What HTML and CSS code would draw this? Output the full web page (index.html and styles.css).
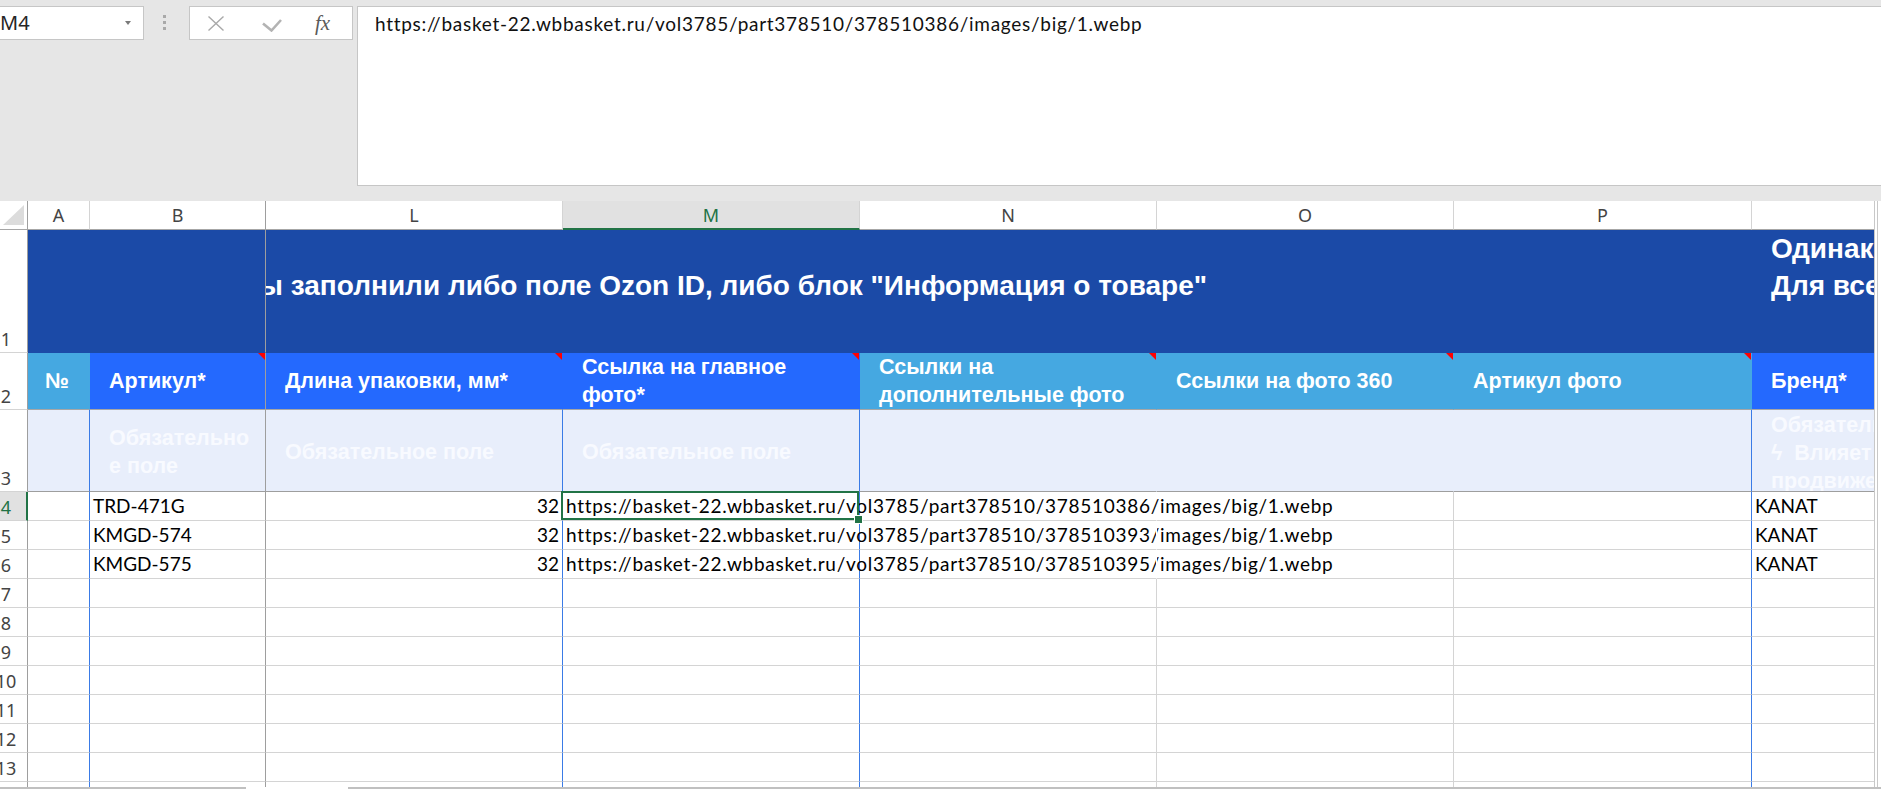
FILE: index.html
```html
<!DOCTYPE html>
<html lang="ru">
<head>
<meta charset="utf-8">
<title>Excel</title>
<link rel="stylesheet" href="styles.css">
</head>
<body>
<div class="app">
  <div class="fbar">
    <div class="namebox"><span class="nb-text">M4</span><span class="nb-arrow"></span></div>
    <div class="grip"><i></i><i></i><i></i></div>
    <div class="fbtns">
      <svg class="ic-x" width="16" height="15" viewBox="0 0 16 15"><path d="M0.5 0.5 L15.5 14.5 M15.5 0.5 L0.5 14.5" stroke="#a9a9a9" stroke-width="1.4" fill="none"/></svg>
      <svg class="ic-ok" width="20" height="13" viewBox="0 0 20 13"><path d="M1 4.5 L9.5 11.5 L19 1" stroke="#b3b3b3" stroke-width="2.6" fill="none"/></svg>
      <span class="fx">fx</span>
    </div>
    <div class="finput url">https://basket-22.wbbasket.ru/vol3785/part378510/378510386/images/big/1.webp</div>
  </div>

  <div class="main">
    <div class="sheet">
      <!-- column headers -->
      <div class="corner"><svg width="27" height="28" viewBox="0 0 27 28"><polygon points="24,4 24,24 3,24" fill="#dcdcdc"/></svg></div>
      <div class="ch">A</div>
      <div class="ch chb">B</div>
      <div class="ch">L</div>
      <div class="ch chsel">M</div>
      <div class="ch">N</div>
      <div class="ch">O</div>
      <div class="ch">P</div>
      <div class="ch chq"></div>

      <!-- row 1 -->
      <div class="rh"><span>1</span></div>
      <div class="c dk cb span2"></div>
      <div class="c dk title span5"><span>Убедитесь, что вы заполнили либо поле Ozon ID, либо блок "Информация о товаре"</span></div>
      <div class="c dk cq qtitle"><div>Одинаковые характеристики</div><div>Для всех вариантов</div></div>

      <!-- row 2 -->
      <div class="rh"><span>2</span></div>
      <div class="c lt ca hd center">№</div>
      <div class="c br cb hd note">Артикул*</div>
      <div class="c br cl hd note">Длина упаковки, мм*</div>
      <div class="c br cm hd note">Ссылка на главное<br>фото*</div>
      <div class="c lt cn hd note">Ссылки на<br>дополнительные фото</div>
      <div class="c lt co hd note">Ссылки на фото 360</div>
      <div class="c lt cp hd note">Артикул фото</div>
      <div class="c br cq hd">Бренд*</div>

      <!-- row 3 -->
      <div class="rh"><span>3</span></div>
      <div class="c ph ca"></div>
      <div class="c ph cb hd">Обязательно<br>е поле</div>
      <div class="c ph cl hd">Обязательное поле</div>
      <div class="c ph cm hd">Обязательное поле</div>
      <div class="c ph cn"></div>
      <div class="c ph co"></div>
      <div class="c ph cp"></div>
      <div class="c ph cq hd q3">Обязательное поле<br>ϟ&nbsp; Влияет на<br>продвижение</div>

      <!-- row 4 -->
      <div class="rh rhsel"><span>4</span></div>
      <div class="c ca"></div>
      <div class="c cb">TRD-471G</div>
      <div class="c cl num">32</div>
      <div class="c cm ov url sel">https://basket-22.wbbasket.ru/vol3785/part378510/378510386/images/big/1.webp</div>
      <div class="c cn nr"></div>
      <div class="c co"></div>
      <div class="c cp"></div>
      <div class="c cq">KANAT</div>

      <!-- row 5 -->
      <div class="rh"><span>5</span></div>
      <div class="c ca"></div>
      <div class="c cb">KMGD-574</div>
      <div class="c cl num">32</div>
      <div class="c cm ov url">https://basket-22.wbbasket.ru/vol3785/part378510/378510393/images/big/1.webp</div>
      <div class="c cn nr"></div>
      <div class="c co"></div>
      <div class="c cp"></div>
      <div class="c cq">KANAT</div>

      <!-- row 6 -->
      <div class="rh"><span>6</span></div>
      <div class="c ca"></div>
      <div class="c cb">KMGD-575</div>
      <div class="c cl num">32</div>
      <div class="c cm ov url">https://basket-22.wbbasket.ru/vol3785/part378510/378510395/images/big/1.webp</div>
      <div class="c cn nr"></div>
      <div class="c co"></div>
      <div class="c cp"></div>
      <div class="c cq">KANAT</div>

      <!-- rows 7-13 -->
      <div class="rh"><span>7</span></div>
      <div class="c ca"></div><div class="c cb"></div><div class="c cl"></div><div class="c cm"></div><div class="c cn"></div><div class="c co"></div><div class="c cp"></div><div class="c cq"></div>
      <div class="rh"><span>8</span></div>
      <div class="c ca"></div><div class="c cb"></div><div class="c cl"></div><div class="c cm"></div><div class="c cn"></div><div class="c co"></div><div class="c cp"></div><div class="c cq"></div>
      <div class="rh"><span>9</span></div>
      <div class="c ca"></div><div class="c cb"></div><div class="c cl"></div><div class="c cm"></div><div class="c cn"></div><div class="c co"></div><div class="c cp"></div><div class="c cq"></div>
      <div class="rh"><span>10</span></div>
      <div class="c ca"></div><div class="c cb"></div><div class="c cl"></div><div class="c cm"></div><div class="c cn"></div><div class="c co"></div><div class="c cp"></div><div class="c cq"></div>
      <div class="rh"><span>11</span></div>
      <div class="c ca"></div><div class="c cb"></div><div class="c cl"></div><div class="c cm"></div><div class="c cn"></div><div class="c co"></div><div class="c cp"></div><div class="c cq"></div>
      <div class="rh"><span>12</span></div>
      <div class="c ca"></div><div class="c cb"></div><div class="c cl"></div><div class="c cm"></div><div class="c cn"></div><div class="c co"></div><div class="c cp"></div><div class="c cq"></div>
      <div class="rh"><span>13</span></div>
      <div class="c ca"></div><div class="c cb"></div><div class="c cl"></div><div class="c cm"></div><div class="c cn"></div><div class="c co"></div><div class="c cp"></div><div class="c cq"></div>

      <!-- row 14 (partial) -->
      <div class="rh last"></div>
      <div class="c ca last"></div><div class="c cb last"></div><div class="c cl last"></div><div class="c cm last"></div><div class="c cn last"></div><div class="c co last"></div><div class="c cp last"></div><div class="c cq last"></div>
    </div>
    <div class="vscroll"><div class="vtrack"></div></div>
  </div>

  <div class="bottombar"><span class="seg seg1"></span><span class="gap"></span><span class="seg seg2"></span></div>
</div>
</body>
</html>
```

FILE: styles.css
```css
* { box-sizing: border-box; margin: 0; padding: 0; }
html, body { width: 1881px; height: 789px; overflow: hidden; }
body { background: #e6e6e6; font-family: Lato, "Liberation Sans", sans-serif; }

.app { display: flex; flex-direction: column; width: 1881px; height: 789px; overflow: hidden; }

/* ---------- formula bar ---------- */
.fbar { height: 201px; flex: none; display: flex; align-items: flex-start; padding-top: 6px; background: #e6e6e6; }
.namebox {
  flex: none; margin-left: -10px; width: 154px; height: 34px;
  background: #fff; border: 1px solid #c6c6c6;
  display: flex; align-items: center; justify-content: space-between;
  padding: 0 12px 0 9px;
}
.nb-text { font: 20px/24px "Noto Sans", sans-serif; color: #262626; }
.nb-arrow { width: 0; height: 0; border-top: 4px solid #7a7a7a; border-left: 3px solid transparent; border-right: 3px solid transparent; }
.grip { flex: none; display: flex; flex-direction: column; gap: 3px; margin: 9px 0 0 19px; }
.grip i { display: block; width: 3px; height: 3px; background: #a9a9a9; }
.fbtns {
  flex: none; margin-left: 23px; width: 164px; height: 34px;
  background: #fff; border: 1px solid #c6c6c6;
  display: flex; align-items: center;
}
.ic-x { margin-left: 18px; margin-top: 1px; }
.ic-ok { margin-left: 38px; margin-top: 5px; }
.fx { margin-left: 33px; font: italic 21px/24px "Liberation Serif", serif; color: #5a5a5a; }
.finput {
  flex: none; margin-left: 4px; width: 1540px; height: 180px;
  background: #fff; border: 1px solid #c6c6c6;
  padding: 3px 0 0 17px;
  font: 19px/28px Lato, sans-serif; color: #111;
  white-space: nowrap;
}
.url { letter-spacing: 0.72px; }

/* ---------- sheet ---------- */
.main { display: flex; height: 586px; flex: none; }
.sheet {
  width: 1874px; height: 586px; flex: none; overflow: hidden;
  display: grid;
  grid-template-columns: 28px 62px 176px 297px 297px 297px 297px 298px 122px;
  grid-template-rows: 29px 123px 57px 82px repeat(10, 29px) 5px;
  background: #fff;
}
.vscroll { width: 7px; flex: none; background: #fff; border-left: 1px solid #c8c8c8; }
.vtrack { margin-left: 2px; height: 100%; border-left: 1px solid #c8c8c8; }

.corner { background: #fff; border-right: 1px solid #9e9e9e; border-bottom: 1px solid #a6a6a6; }
.corner svg { display: block; }
.ch {
  display: flex; align-items: center; justify-content: center;
  background: #fff; border-right: 1px solid #d4d4d4; border-bottom: 1px solid #a6a6a6;
  font: 18px/24px "Noto Sans", sans-serif; color: #444;
}
.chb { border-right-color: #9e9e9e; }
.chq { border-right: none; }
.chsel { background: #e1e1e1; color: #217346; border-bottom: 2px solid #217346; }

.rh {
  display: flex; align-items: flex-end; overflow: hidden;
  background: #fff; border-right: 1px solid #9e9e9e; border-bottom: 1px solid #d4d4d4;
  padding-bottom: 1px;
  font: 18px/24px "Noto Sans", sans-serif; color: #444;
}
.rh span { flex: none; width: 40px; margin-left: -14px; text-align: center; }
.rhsel { background: #e1e1e1; color: #217346; border-right: 2px solid #217346; }

.c {
  border-right: 1px solid #d4d4d4; border-bottom: 1px solid #d4d4d4;
  overflow: hidden; white-space: nowrap;
  padding: 0 3px;
  font: 19px/28px Lato, sans-serif; color: #000;
}
.ca, .cl, .cm, .cp { border-right-color: #3a7be6; }
.cq { border-right: none; }
.nr { border-right-color: #fff; }
.num { text-align: right; }
.ov { overflow: visible; }
.span2 { grid-column: span 2; }
.span5 { grid-column: span 5; }
.last { border-bottom: none; }

/* fills */
.dk { background: #1b4aa7; border-right-color: #1b4aa7; border-bottom-color: #1b4aa7; color: #fff; }
.br { background: #2469fe; border-right-color: #2469fe; border-bottom-color: #a6a6a6; color: #fff; }
.lt { background: #45a8e1; border-right-color: #45a8e1; border-bottom-color: #a6a6a6; color: #fff; }
.ph { background: #e8eefb; border-right-color: #e8eefb; border-bottom-color: #9e9e9e; color: #f8faff; padding-top: 3px; }
.ph.ca, .ph.cl, .ph.cm, .ph.cp { border-right-color: #3a7be6; }
.cb { border-right-color: #9e9e9e; }

.hd {
  display: flex; align-items: center; padding-left: 19px;
  font: bold 21.5px/28px "Liberation Sans", Arial, sans-serif;
  position: relative;
}
.hd.center { justify-content: center; padding-left: 0; }
.q3 { padding-top: 5px; }

.title {
  display: flex; justify-content: flex-end; align-items: center;
  padding: 0 544px 12px 0;
  font: bold 28px/37px "Liberation Sans", Arial, sans-serif;
}
.title span { flex: none; }
.qtitle { padding: 0 0 0 19px; font: bold 28px/37px "Liberation Sans", Arial, sans-serif; }

.note::after {
  content: ""; position: absolute; top: 0; right: 0;
  width: 0; height: 0;
  border-top: 7px solid #ff0000; border-left: 7px solid transparent;
}

/* selected cell */
.sel { position: relative; z-index: 2; }
.sel::before {
  content: ""; position: absolute; left: -2px; top: -1px; right: 0; bottom: 0;
  border: 2px solid #217346;
}
.sel::after {
  content: ""; position: absolute; right: -4px; bottom: -4px;
  width: 7px; height: 7px; background: #217346; border: 1px solid #fff;
}

/* bottom bar */
.bottombar { height: 2px; flex: none; display: flex; background: #fff; }
.seg { height: 2px; background: #c0c0c0; }
.seg1 { width: 246px; }
.gap { width: 102px; }
.seg2 { flex: 1; }
```
